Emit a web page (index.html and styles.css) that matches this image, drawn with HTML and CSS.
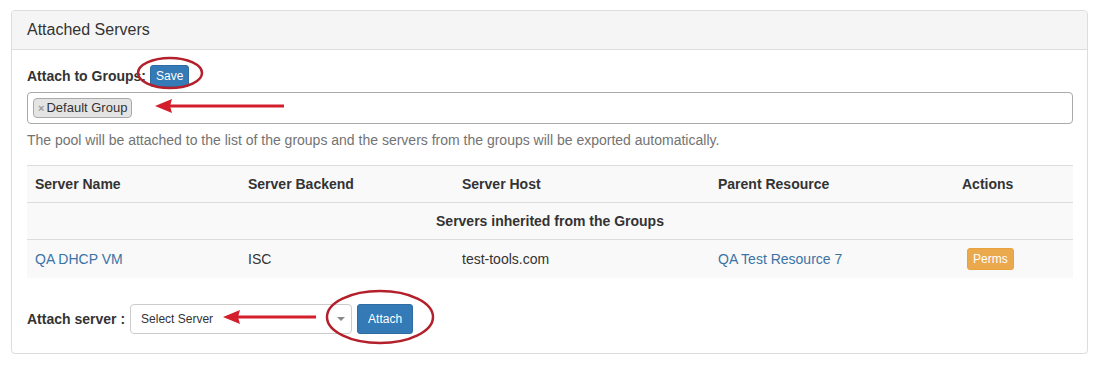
FILE: index.html
```html
<!DOCTYPE html>
<html lang="en">
<head>
  <meta charset="UTF-8" />
  <title>Attached Servers</title>
  <link rel="stylesheet" href="styles.css">
</head>
<body>

  <div class="panel">
    <div class="panel-heading">
      <h3 class="panel-title">Attached Servers</h3>
    </div>

    <div class="panel-body">
      <div class="group-line">
        <label class="bold">Attach to Groups:</label>
        <button class="btn btn-primary btn-xs">Save</button>
      </div>

      <div class="tag-input">
        <span class="tag"><span class="tag-x">×</span>Default Group</span>
      </div>

      <p class="help-block">The pool will be attached to the list of the groups and the servers from the groups will be exported automatically.</p>

      <table class="table">
        <thead>
          <tr>
            <th class="c1">Server Name</th>
            <th class="c2">Server Backend</th>
            <th class="c3">Server Host</th>
            <th class="c4">Parent Resource</th>
            <th class="c5">Actions</th>
          </tr>
        </thead>
        <tbody>
          <tr>
            <th colspan="5" class="center">Servers inherited from the Groups</th>
          </tr>
          <tr>
            <td><a href="#">QA DHCP VM</a></td>
            <td>ISC</td>
            <td>test-tools.com</td>
            <td><a href="#">QA Test Resource 7</a></td>
            <td><button class="btn btn-warning btn-xs perms">Perms</button></td>
          </tr>
        </tbody>
      </table>

      <div class="attach-line">
        <label class="bold">Attach server :</label>
        <div class="select-box">
          <span>Select Server</span>
          <span class="caret"></span>
        </div>
        <button class="btn btn-primary btn-sm">Attach</button>
      </div>
    </div>
  </div>

  <!-- red markup drawn on top of the screenshot -->
  <svg class="marks" viewBox="0 0 1097 365" width="1097" height="365">
    <g fill="none" stroke="#b3202c" stroke-width="2.5">
      <ellipse cx="170" cy="73" rx="32" ry="15"/>
      <ellipse cx="380" cy="317" rx="53" ry="26"/>
    </g>
    <g stroke="#d21f2b" stroke-width="3">
      <line x1="168" y1="106" x2="284" y2="106"/>
      <line x1="236" y1="317" x2="316" y2="317"/>
    </g>
    <g fill="#d21f2b">
      <polygon points="155,106 172,99 170,106 172,113"/>
      <polygon points="223,317 240,310 238,317 240,324"/>
    </g>
  </svg>

</body>
</html>
```

FILE: styles.css
```css
html, body {
  margin: 0;
  padding: 0;
  background: #fff;
  font-family: "Liberation Sans", Arial, sans-serif;
  font-size: 14px;
  line-height: 20px;
  color: #333;
}

.panel {
  margin: 10px 0 0 11px;
  width: 1075px;
  border: 1px solid #ddd;
  border-radius: 4px;
  box-shadow: 0 1px 1px rgba(0, 0, 0, 0.05);
}

.panel-heading {
  background: #f5f5f5;
  border-bottom: 1px solid #ddd;
  border-radius: 3px 3px 0 0;
  padding: 9px 15px 10px 15px;
}

.panel-title {
  margin: 0;
  font-size: 16px;
  font-weight: normal;
  line-height: 19px;
  color: #333;
}

.panel-body {
  padding: 15px 14px 19px 15px;
}

.bold {
  font-weight: bold;
}

.group-line {
  display: flex;
  align-items: center;
  gap: 4px;
  height: 22px;
}

.btn {
  font-family: "Liberation Sans", Arial, sans-serif;
  border: 1px solid transparent;
  border-radius: 3px;
  color: #fff;
  cursor: pointer;
}

.btn-primary {
  background: #337ab7;
  border-color: #2e6da4;
}

.btn-warning {
  background: #eaa94c;
  border-color: #e9a23c;
}

.btn-xs {
  font-size: 12px;
  line-height: 18px;
  padding: 1px 5px;
}

.btn-sm {
  font-size: 12px;
  line-height: 18px;
  padding: 5px 10px;
  border-radius: 3px;
}

.tag-input {
  margin-top: 5px;
  height: 30px;
  border: 1px solid #aaa;
  border-radius: 4px;
  display: flex;
  align-items: center;
  padding: 0 5px;
}

.tag {
  background: #e4e4e4;
  border: 1px solid #aaa;
  border-radius: 4px;
  padding: 0 4px;
  line-height: 17px;
  font-size: 13px;
  color: #333;
}

.tag-x {
  color: #999;
  font-size: 11px;
  font-weight: bold;
  margin-right: 2px;
}

.help-block {
  margin: 6px 0 15px 0;
  color: #737373;
}

.table {
  width: 100%;
  border-collapse: collapse;
  margin-bottom: 26px;
}

.table th,
.table td {
  padding: 8px;
  text-align: left;
  border-top: 1px solid #ddd;
  background: #f9f9f9;
  height: 20px;
}

.table th.center {
  text-align: center;
}

.c1 { width: 197px; }
.c2 { width: 198px; }
.c3 { width: 240px; }
.c4 { width: 228px; }

a {
  color: #3a73a6;
  text-decoration: none;
}

.perms {
  margin-left: 5px;
  padding: 1px 5px;
}

.attach-line {
  display: flex;
  align-items: center;
  gap: 5px;
}

.select-box {
  width: 200px;
  height: 28px;
  border: 1px solid #ccc;
  border-radius: 4px;
  padding: 0 10px;
  display: flex;
  align-items: center;
  justify-content: space-between;
  font-size: 12px;
  color: #333;
}

.caret {
  width: 0;
  height: 0;
  border-left: 4px solid transparent;
  border-right: 4px solid transparent;
  border-top: 4px solid #888;
  margin-right: -4px;
}

.marks {
  position: absolute;
  top: 0;
  left: 0;
  pointer-events: none;
}
```
